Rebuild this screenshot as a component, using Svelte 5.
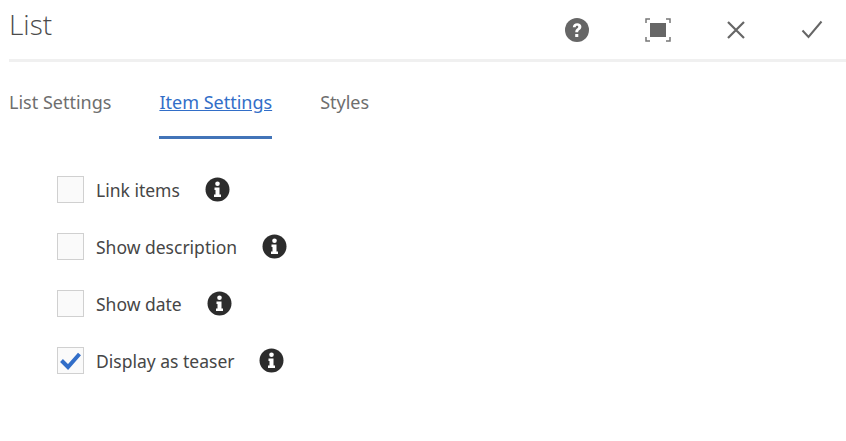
<script>
  const tabs = [
    { label: 'List Settings' },
    { label: 'Item Settings', active: true },
    { label: 'Styles' }
  ];
  const items = [
    { label: 'Link items', checked: false },
    { label: 'Show description', checked: false },
    { label: 'Show date', checked: false },
    { label: 'Display as teaser', checked: true }
  ];
</script>

<div class="dialog">
  <header class="head">
    <h1>List</h1>
    <div class="actions">
      <button class="act" aria-label="Help">
        <svg width="26" height="26" viewBox="0 0 26 26">
          <circle cx="13" cy="13" r="12" fill="#666" />
          <path d="M8.8 10.2c.2-2.6 2-3.9 4.4-3.9 2.500 0 4.200 1.400 4.200 3.500 0 1.600-.9 2.500-2 3.300-.9.700-1.200 1.100-1.200 2.100h-2.900c0-1.800.5-2.700 1.800-3.700.8-.6 1.200-1 1.200-1.600 0-.7-.5-1.100-1.200-1.100-.8 0-1.300.5-1.400 1.400z" fill="#fff" />
          <rect x="11.200" y="17" width="3.100" height="3.100" rx=".5" fill="#fff" />
        </svg>
      </button>
      <button class="act" aria-label="Fullscreen">
        <svg width="26" height="24" viewBox="0 0 26 24">
          <rect x="5" y="5" width="16" height="14" fill="#666" />
          <path d="M1 5V1h4M21 1h4v4M25 19v4h-4M5 23H1v-4" fill="none" stroke="#777" stroke-width="1.500" />
        </svg>
      </button>
      <button class="act" aria-label="Close">
        <svg width="20" height="20" viewBox="0 0 20 20">
          <path d="M2 2l16 16M18 2L2 18" fill="none" stroke="#666" stroke-width="2.200" />
        </svg>
      </button>
      <button class="act" aria-label="Done">
        <svg width="22" height="20" viewBox="0 0 22 20">
          <path d="M1.500 10.500l6 6.500L20.500 1.500" fill="none" stroke="#666" stroke-width="2" />
        </svg>
      </button>
    </div>
  </header>

  <nav class="tabs">
    {#each tabs as t}
      <a href="#top" class="tab" class:active={t.active}>{t.label}</a>
    {/each}
  </nav>

  <div class="fields">
    {#each items as item}
      <div class="row">
        <span class="box">
          {#if item.checked}
            <svg width="25" height="25" viewBox="0 0 25 25">
              <path d="M3.500 12.500l6.500 6.500L21.500 6" fill="none" stroke="#326ec8" stroke-width="4" />
            </svg>
          {/if}
        </span>
        <span class="label">{item.label}</span>
        <svg class="info" width="25" height="25" viewBox="0 0 25 25">
          <circle cx="12.500" cy="12.500" r="12" fill="#2c2c2c" />
          <circle cx="12.500" cy="6.800" r="2.300" fill="#fff" />
          <path d="M9.500 10.500h5v7h1.500v2.500H9v-2.500h1.500v-4.500h-1z" fill="#fff" />
        </svg>
      </div>
    {/each}
  </div>
</div>

<style>
  :global(body) {
    background: #fff;
  }
  .dialog {
    width: 846px;
    height: 441px;
    overflow: hidden;
    font-family: "Noto Sans", sans-serif;
    color: #323232;
  }
  .head {
    display: flex;
    justify-content: space-between;
    height: 59px;
    margin-left: 9px;
    border-bottom: 3px solid #f0f0f0;
  }
  h1 {
    margin: 5px 0 0;
    font-size: 28px;
    font-weight: 300;
    font-family: "Open Sans", sans-serif;
    line-height: 38px;
    color: #4b4b4b;
  }
  .actions {
    display: flex;
    align-items: center;
    gap: 55px;
    padding-right: 23px;
    margin-top: 0;
  }
  .act {
    display: flex;
    padding: 0;
    border: 0;
    background: none;
  }
  .tabs {
    display: flex;
    gap: 48px;
    margin: 23px 0 0 9px;
    height: 54px;
  }
  .tab {
    height: 54px;
    box-sizing: border-box;
    padding-top: 5px;
    font-size: 18px;
    line-height: 25px;
    color: #6e6e6e;
    text-decoration: none;
  }
  .tab.active {
    color: #326ec8;
    text-decoration: underline;
    border-bottom: 3px solid #4274b8;
  }
  .fields {
    margin: 37px 0 0 57px;
    display: flex;
    flex-direction: column;
    gap: 30px;
  }
  .row {
    display: flex;
    align-items: center;
    height: 27px;
  }
  .box {
    box-sizing: border-box;
    width: 27px;
    height: 27px;
    border: 1px solid #d0d0d0;
    background: #fafafa;
    display: flex;
  }
  .label {
    margin-left: 12px;
    font-size: 17.500px;
    color: #464646;
  }
  .info {
    margin-left: 25px;
  }
</style>
